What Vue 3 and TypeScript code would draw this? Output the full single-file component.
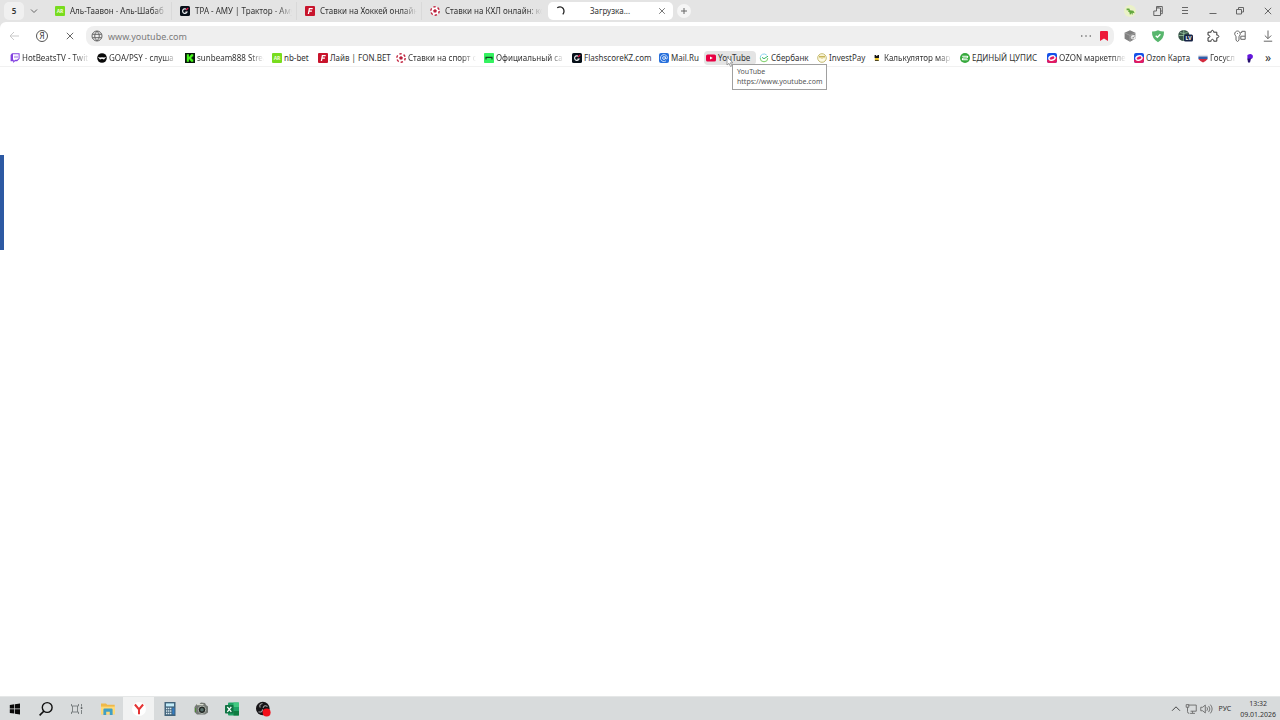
<script setup lang="ts">
import { ref } from 'vue'

interface Tab { icon: string; title: string }
interface Bookmark { icon: string; title: string; width: number; fade?: boolean; hovered?: boolean }
interface Tool { icon: string; label: string }

const address = ref('www.youtube.com')

const tabs: Tab[] = [
  { icon: 'nb', title: 'Аль-Таавон - Аль-Шабаб' },
  { icon: 'flash', title: 'ТРА - АМУ | Трактор - Аму' },
  { icon: 'fon', title: 'Ставки на Хоккей онлайн' },
  { icon: 'ball', title: 'Ставки на КХЛ онлайн: ко' },
]

const bookmarks: Bookmark[] = [
  { icon: 'twitch', title: 'HotBeatsTV - Twit', width: 87, fade: true },
  { icon: 'goa', title: 'GOA/PSY - слуша', width: 88, fade: true },
  { icon: 'kick', title: 'sunbeam888 Strea', width: 87, fade: true },
  { icon: 'nb', title: 'nb-bet', width: 46 },
  { icon: 'fon', title: 'Лайв | FON.BET', width: 78 },
  { icon: 'ball', title: 'Ставки на спорт о', width: 88, fade: true },
  { icon: 'official', title: 'Официальный са', width: 88, fade: true },
  { icon: 'flash', title: 'FlashscoreKZ.com', width: 87 },
  { icon: 'mail', title: 'Mail.Ru', width: 47 },
  { icon: 'youtube', title: 'YouTube', width: 53, hovered: true },
  { icon: 'sber', title: 'Сбербанк', width: 58 },
  { icon: 'invest', title: 'InvestPay', width: 55 },
  { icon: 'calc', title: 'Калькулятор мар', width: 88, fade: true },
  { icon: 'cupis', title: 'ЕДИНЫЙ ЦУПИС', width: 87 },
  { icon: 'ozon', title: 'OZON маркетпле', width: 87, fade: true },
  { icon: 'ozon', title: 'Ozon Карта', width: 64 },
  { icon: 'gos', title: 'Госусл', width: 47, fade: true },
  { icon: 'pwave', title: '', width: 12 },
]

const windowTools: Tool[] = [
  { icon: 'dino', label: 'Профиль' },
  { icon: 'panels', label: 'Коллекции' },
  { icon: 'menu', label: 'Меню' },
  { icon: 'min', label: 'Свернуть' },
  { icon: 'restore', label: 'Восстановить' },
  { icon: 'close', label: 'Закрыть' },
]

const extensions: Tool[] = [
  { icon: 'cube', label: 'Расширение' },
  { icon: 'shield', label: 'Защита' },
  { icon: 'lv', label: 'Перевод' },
  { icon: 'puzzle', label: 'Расширения' },
  { icon: 'keys', label: 'Пароли' },
  { icon: 'download', label: 'Загрузки' },
]

const apps: Tool[] = [
  { icon: 'folder', label: 'Проводник' },
  { icon: 'yandex', label: 'Яндекс Браузер' },
  { icon: 'calculator', label: 'Калькулятор' },
  { icon: 'camera', label: 'Камера' },
  { icon: 'excel', label: 'Excel' },
  { icon: 'obs', label: 'OBS' },
]
</script>

<template>
  <div class="screen">
    <svg class="defs" aria-hidden="true">
      <symbol id="nb" viewBox="0 0 10 10"><rect width="10" height="10" rx="1" fill="#78dc1e" /><text x="5" y="7" text-anchor="middle" font-size="5" font-weight="700" fill="#effbd9">AR</text></symbol>
      <symbol id="flash" viewBox="0 0 10 10"><rect width="10" height="10" rx="1.6" fill="#071019" /><path d="M6 3.1A2.3 2.3 0 1 0 7 6.1H5.4" fill="none" stroke="#e8ecee" stroke-width="1.2" /><path d="M6 4.2 8.2 2" stroke="#ee1848" stroke-width="1.2" /></symbol>
      <symbol id="fon" viewBox="0 0 10 10"><rect width="10" height="10" rx="1" fill="#c8142c" /><path d="M3.4 8 4.4 2.6H7.7M4 5.2H6.9" fill="none" stroke="#fff" stroke-width="1.3" /></symbol>
      <symbol id="ball" viewBox="0 0 10 10"><circle cx="5" cy="5" r="4.2" fill="#fff" stroke="#c22742" stroke-width="1.4" stroke-dasharray="2.4 2" /><path d="m5 3 1.9 1.4-.7 2.2H3.8l-.7-2.2Z" fill="#b9203c" /></symbol>
      <symbol id="twitch" viewBox="0 0 10 10"><path d="M2 .2h7.6v5.6L7.2 8.2H5L3.2 10V8.2H.6V2Z" fill="#8240e0" /><path d="M3 1.2h5.6v4.2L7 6.8H5L3.8 8V6.8H3Z" fill="#fff" /><path d="M5 2.8v2.3M7 2.8v2.3" stroke="#8240e0" stroke-width=".8" /></symbol>
      <symbol id="goa" viewBox="0 0 10 10"><circle cx="5" cy="5" r="4.8" fill="#090909" /><path d="M.8 4 3 4.6 5 4.2l2 .4 2.2-.6L7 6.4 5 5.8 3 6.4Z" fill="#fff" /></symbol>
      <symbol id="kick" viewBox="0 0 10 10"><rect width="10" height="10" fill="#07180a" /><path d="M1.8 1.2h2.1v2.2h1V2.3h1V1.2h2.4v2.3H7.2v1h-1v1h1v1h1.1v2.3H5.9V7.7h-1V6.6h-1v2.2H1.8Z" fill="#46f51c" /></symbol>
      <symbol id="official" viewBox="0 0 10 10"><rect width="10" height="10" rx=".7" fill="#34f260" /><path d="M2 6.5V4.3h6v2.2" fill="none" stroke="#104621" stroke-width="1.2" /></symbol>
      <symbol id="mail" viewBox="0 0 10 10"><rect width="10" height="10" rx="2" fill="#2770dc" /><circle cx="5" cy="5" r="1.4" fill="none" stroke="#fff" stroke-width=".8" /><path d="M6.5 3.5v2q1.6 1.4 1.9-.8A3.5 3.5 0 1 0 7 7.9" fill="none" stroke="#e9f3ff" stroke-width=".8" /></symbol>
      <symbol id="youtube" viewBox="0 0 10 10"><rect y="1.4" width="10" height="7.2" rx="1.6" fill="#e80043" /><path d="m4 3.4 2.8 1.6L4 6.6Z" fill="#fff" /></symbol>
      <symbol id="sber" viewBox="0 0 10 10"><path d="M7.8 2.2A3.8 3.8 0 0 0 1.2 5" fill="none" stroke="#8bd2ee" /><path d="M1.2 5A3.8 3.8 0 0 0 8.8 5" fill="none" stroke="#7bcf65" /><path d="m3 4.4 2 1.3 4-2.5" fill="none" stroke="#36b66b" /></symbol>
      <symbol id="invest" viewBox="0 0 10 10"><circle cx="5" cy="5" r="4.3" fill="#fdfbe6" stroke="#b7aa52" stroke-width=".8" /><path d="M2 3.4h6M3 5.2V3.5M5 5.8V3.5M7 5.2V3.5" fill="none" stroke="#c0a840" stroke-width=".9" /></symbol>
      <symbol id="calc" viewBox="0 0 10 10"><path d="M2.6 2h1.6v1h1.2V2H7v3H2.6Z" fill="#161616" /><path d="M2.8 5h4v3h-4Z" fill="#edc82e" /><path d="M3 7.5h3.7" stroke="#4e4828" /></symbol>
      <symbol id="cupis" viewBox="0 0 10 10"><circle cx="5" cy="5" r="5" fill="#36a93c" /><path d="M2.2 3.3h4.9q1 0 .4 1L6.8 5H3.2l-.7.9q-.4.9.5.9h4.8" fill="none" stroke="#fff" stroke-width="1.1" /></symbol>
      <symbol id="ozon" viewBox="0 0 10 10"><rect width="10" height="10" rx="2" fill="#1550e8" /><path d="M0 7 10 4v4a2 2 0 0 1-2 2H2a2 2 0 0 1-2-2Z" fill="#e21b62" /><ellipse cx="5" cy="5" rx="3.2" ry="2.1" fill="#e21b62" stroke="#fff" stroke-width="1.4" transform="rotate(-20 5 5)" /></symbol>
      <symbol id="gos" viewBox="0 0 10 10"><path d="M.4 1.8h9.2v2H.4Z" fill="#e4e4e8" /><path d="M.4 3.5h9.2v2.7H.4Z" fill="#315da9" /><path d="M.5 6h9Q8 8.2 5 9.5 2 8.2.5 6Z" fill="#d32a3d" /></symbol>
      <symbol id="pwave" viewBox="0 0 10 10"><path d="M2.4 2Q6.5-.3 7.8 2.5 8.4 6 4.8 6L2.4 6.4Z" fill="#6416dc" /><path d="M2.4 5.8 6 5.5 5 9.6H3Z" fill="#27116f" /></symbol>
      <symbol id="dino" viewBox="0 0 16 16"><circle cx="8" cy="8" r="6" fill="#eaf1c8" /><path d="M4.6 5.5h2.8l.6 1.8 3.4.5 1.3 2.5-2-.6v1.7h-.8L9.4 10 8.6 11.4H7.8L7.4 9.2 6 8.6l.7-1.4H4.6Z" fill="#63a83e" /></symbol>
      <symbol id="panels" viewBox="0 0 16 16"><path d="M6.5 5V3.5h5.8v7.2h-1.8M3.8 8H6.5V5h4v7.5H3.8ZM8 3.5V5M10.5 8h1.8" class="line" /></symbol>
      <symbol id="menu" viewBox="0 0 16 16"><path d="M5 4.5h6M5 7.5h6M5 10.5h6" class="line" /></symbol>
      <symbol id="min" viewBox="0 0 16 16"><path d="M4.5 10.5h7" class="line" /></symbol>
      <symbol id="restore" viewBox="0 0 16 16"><path d="M4.5 6.5h5V11h-5ZM6.5 6.5v-2h5V9h-2" class="line" /></symbol>
      <symbol id="close" viewBox="0 0 16 16"><path d="m4.8 4.8 6.4 6.4m0-6.4-6.4 6.4" class="line" /></symbol>
      <symbol id="cube" viewBox="0 0 16 16"><path d="m8 2.2 5.4 2.6v6L8 13.8l-5.4-3v-6Z" fill="#808080" /><path d="m2.8 5 5.2 2.4L13.2 5M8 7.4v6" fill="none" stroke="#aaa" stroke-width=".7" /><circle cx="11.2" cy="9.3" r="2.3" fill="#eee" /><path d="m10 9.3 1 1 1.5-2" fill="none" stroke="#777" stroke-width=".8" /></symbol>
      <symbol id="shield" viewBox="0 0 16 16"><path d="M8 2.2q3 1.3 6 1.2.4 7-6 10.8Q1.6 10.4 2 3.4 5 3.5 8 2.2Z" fill="#58b66d" /><path d="m5.7 7.7 1.7 1.6 3-3" fill="none" stroke="#fff" stroke-width="1.3" /></symbol>
      <symbol id="lv" viewBox="0 0 16 16"><circle cx="6.8" cy="7.5" r="5.6" fill="#385348" /><path d="M1.4 7.5h11M6.8 2v11M3 4.5Q6.8 6.5 10.6 4.5" fill="none" stroke="#9ac9a4" stroke-width=".8" /><rect x="7" y="6.5" width="9" height="7" rx="1.5" fill="#162346" /><text x="11.5" y="12" text-anchor="middle" font-size="5" font-weight="700" fill="#fff">LV</text></symbol>
      <symbol id="puzzle" viewBox="0 0 16 16"><path d="M3 4.2h3.2c-.7-2.5 3-2.5 2.4 0h3.2v3c2.7-.6 2.7 3 0 2.5v3.5H8.7c.4-2.5-3-2.5-2.5 0H3V9.7c2.5.4 2.5-3 0-2.5Z" class="dark" /></symbol>
      <symbol id="keys" viewBox="0 0 16 16"><path d="M4 8.2a2.8 2.8 0 1 1 3 0v4l-1.5 1.3L4 12.2ZM5.5 5v.8M8.6 4.5H9.8V3.3h3.4v8H8.8V8.2h4.4" class="line" /></symbol>
      <symbol id="download" viewBox="0 0 16 16"><path d="M8 2.5v8M4.8 7.5 8 10.7l3.2-3.2M3.8 13.2h8.4" class="line" /></symbol>
      <symbol id="windows" viewBox="0 0 16 16"><path d="m2.8 4 4.5-.7v4.2H2.8Zm5.2-.8 5-.8v5.1H8ZM2.8 8.3h4.5v4.3L2.8 12Zm5.2 0h5v5.2l-5-.8Z" fill="#080808" /></symbol>
      <symbol id="search" viewBox="0 0 16 16"><circle cx="9.2" cy="6.5" r="4.9" fill="none" stroke="#111" stroke-width="1.4" /><path d="m6 10-4.4 4.4" stroke="#111" stroke-width="1.6" /></symbol>
      <symbol id="taskview" viewBox="0 0 16 16"><path d="M2.5 3v2h7V3M2.5 13v-2h7v2M3.5 5v6M8.5 5v6M12.5 3v2.5M12.5 9V13" fill="none" stroke="#74797b" stroke-width=".9" /><path d="M11.8 6.3h1.5v1.5h-1.5Z" fill="#3c4143" /></symbol>
      <symbol id="folder" viewBox="0 0 16 16"><path d="M1 2.4h5l1.2 1.4h7.5v9.4H1Z" fill="#efb949" /><path d="M1 5.6h14v7.6H1Z" fill="#ffda78" /><path d="M3.4 14V8.6q0-1 1-1h7.2q1 0 1 1V14H9.8v-3.2H6.2V14Z" fill="#419fc5" /></symbol>
      <symbol id="yandex" viewBox="0 0 16 16"><circle cx="8" cy="8" r="7" fill="#fff" /><path d="m3.9 3.5 4.1 5 4.1-5M8 8v5.2" fill="none" stroke="#e43434" stroke-width="2" /></symbol>
      <symbol id="calculator" viewBox="0 0 16 16"><rect x="2.5" y="1" width="11" height="14" fill="#42647c" /><path d="M4 2.4h8v3H4Z" fill="#c4edfa" /><path d="M4 7.5h5.5M4 10h5.5M4 12.5h5.5" stroke="#d9e7ed" stroke-width="1.4" stroke-dasharray="1.4 .6" /><path d="M10.4 6.8h2v6.5h-2Z" fill="#327cc5" /></symbol>
      <symbol id="camera" viewBox="0 0 16 16"><path d="m1.5 6 2-2.7 3-.2L8 1.5l4 .6 1 2 2 1.3v6.2l-3 2H4L1.5 11Z" fill="#747974" /><path d="M4 3.6h6.5" stroke="#d6dacf" stroke-width="1.2" /><circle cx="9" cy="8.8" r="3.8" fill="#222724" stroke="#adb4ad" /><circle cx="9" cy="8.8" r="1.8" fill="#58706c" /><path d="M2.5 7v4" stroke="#4c8d35" /></symbol>
      <symbol id="excel" viewBox="0 0 16 16"><rect x="4" y="1.5" width="11" height="13" rx="1" fill="#20a366" /><path d="M9.5 1.5H15V6H9.5Z" fill="#42c881" /><path d="M9.5 10H15v4.5H9.5Z" fill="#107c41" /><rect x="1" y="4" width="8.5" height="8.5" rx=".8" fill="#117344" /><path d="m3.3 5.8 4 5m0-5-4 5" stroke="#fff" stroke-width="1.3" /></symbol>
      <symbol id="obs" viewBox="0 0 16 16"><circle cx="7.8" cy="7.5" r="6.8" fill="#161417" /><path d="M7.5 2.5q-4 .8-2.2 4M12.5 5.5q-3-2-4.4 1.2M3.5 10.8q3.8 1 4.1-2.4" fill="none" stroke="#a5a5a5" stroke-width="1.1" /><circle cx="11.6" cy="11.5" r="4" fill="#f20e18" /></symbol>
      <symbol id="monitor" viewBox="0 0 16 16"><path d="M5 3.5h9v7H7.5M9.8 10.5v2M7 13h5.5M2.5 3v3h3V3ZM4 6v5q0 2 2 2" class="line" /></symbol>
      <symbol id="speaker" viewBox="0 0 16 16"><path d="M2 6h2.2l3-2.5v9l-3-2.5H2ZM9 6q1.5 2 0 4M11 4.5q3 3.5 0 7M13 3q4 5 0 10" class="line" /></symbol>
    </svg>

    <header class="tabstrip">
      <button class="count">5</button>
      <button class="more" aria-label="Список вкладок"><svg viewBox="0 0 16 16" class="i16"><path d="m5 6.5 3 3 3-3" class="line" /></svg></button>
      <nav class="tabs">
        <button v-for="tab in tabs" :key="tab.title" class="tab">
          <svg class="i10"><use :href="'#' + tab.icon" /></svg>
          <span class="tab-title fade">{{ tab.title }}</span>
        </button>
        <div class="tab active">
          <svg class="i10" viewBox="0 0 10 10"><path d="M2.2 1.8Q5.8-.3 8.2 2.5 10 5.4 7.8 8.4" fill="none" stroke="#222" stroke-width="1.3" /></svg>
          <span class="loading">Загрузка...</span>
          <button class="tab-close" aria-label="Закрыть вкладку"><svg class="i14"><use href="#close" /></svg></button>
        </div>
      </nav>
      <button class="new-tab" aria-label="Новая вкладка"><svg viewBox="0 0 14 14" class="i14"><path d="M7 4v6M4 7h6" class="line" /></svg></button>
      <div class="tools">
        <button v-for="tool in windowTools" :key="tool.icon" :aria-label="tool.label"><svg class="i16"><use :href="'#' + tool.icon" /></svg></button>
      </div>
    </header>

    <section class="chrome">
      <div class="toolbar">
        <div class="navigation">
          <button aria-label="Назад"><svg viewBox="0 0 16 16" class="i16"><path d="M13 8H4m4-4L4 8l4 4" fill="none" stroke="#c9c9c9" /></svg></button>
          <button class="ya" aria-label="Яндекс">Я</button>
          <button aria-label="Остановить"><svg class="i16"><use href="#close" /></svg></button>
        </div>
        <div class="omnibox">
          <svg viewBox="0 0 12 12" class="globe"><path d="M6 1a5 5 0 1 0 0 10A5 5 0 0 0 6 1Q1.4 6 6 11 10.6 6 6 1M1.4 4.3h9.2M1.4 7.7h9.2" class="line" /></svg>
          <input v-model="address" aria-label="Адрес" />
          <button class="dots" aria-label="Ещё"><svg viewBox="0 0 12 4" class="dots-icon"><path d="M1 2h1.4M5.3 2h1.4M9.6 2H11" stroke="#777" stroke-width="1.3" /></svg></button>
          <button aria-label="Закладка"><svg viewBox="0 0 10 12" class="flag"><path d="M1 2q0-1 1-1h6q1 0 1 1v9L5 8.5 1 11Z" fill="#ed1838" /></svg></button>
        </div>
        <div class="tools">
          <button v-for="tool in extensions" :key="tool.icon" :aria-label="tool.label"><svg class="i16"><use :href="'#' + tool.icon" /></svg></button>
        </div>
      </div>

      <nav class="bookmarks">
        <a v-for="(mark, index) in bookmarks" :key="index" href="#" class="bookmark" :class="{ hovered: mark.hovered }" :style="{ width: mark.width + 'px' }">
          <svg class="i10"><use :href="'#' + mark.icon" /></svg>
          <span class="mark-title" :class="{ fade: mark.fade }">{{ mark.title }}</span>
          <span v-if="mark.hovered" class="tooltip" role="tooltip">YouTube<br />https://www.youtube.com</span>
          <svg v-if="mark.hovered" class="cursor" viewBox="0 0 8 12"><path d="M1 1v8l2-1.7 1.5 3.2 1.4-.7-1.5-3H7Z" fill="#fff" stroke="#8b8b8b" stroke-width=".8" /></svg>
        </a>
        <button class="overflow" aria-label="Другие закладки">»</button>
      </nav>
    </section>

    <main class="page"><div class="edge"></div></main>

    <footer class="taskbar">
      <div class="system">
        <button aria-label="Пуск"><svg class="i16"><use href="#windows" /></svg></button>
        <button aria-label="Поиск"><svg class="i16"><use href="#search" /></svg></button>
        <button aria-label="Представление задач"><svg class="i16"><use href="#taskview" /></svg></button>
      </div>
      <div class="apps">
        <button v-for="app in apps" :key="app.icon" :aria-label="app.label" :class="{ current: app.icon === 'yandex' }"><svg class="i16"><use :href="'#' + app.icon" /></svg></button>
      </div>
      <div class="tray">
        <svg viewBox="0 0 16 16" class="i14"><path d="m3.5 10 4.5-4.5 4.5 4.5" class="dark" /></svg>
        <svg class="i14"><use href="#monitor" /></svg>
        <svg class="i14"><use href="#speaker" /></svg>
        <span class="lang">РУС</span>
        <time class="clock">13:32<br />09.01.2026</time>
      </div>
    </footer>
  </div>
</template>

<style>
html, body { margin: 0; background: #fff; }
</style>

<style scoped>
.screen { display: flex; flex-direction: column; min-height: 100vh; font-family: "Noto Sans", "Open Sans", sans-serif; font-size: 8px; line-height: 12px; color: #333; background: #e4e4e4; }
.defs { position: absolute; width: 0; height: 0; }
button { display: flex; align-items: center; justify-content: center; border: 0; padding: 0; background: none; font: inherit; color: inherit; }
svg { display: block; flex: none; }
.line { fill: none; stroke: #666; stroke-width: 1; }
.dark { fill: none; stroke: #333; stroke-width: 1; }
.i10 { width: 10px; height: 10px; }
.i14 { width: 14px; height: 14px; }
.i16 { width: 16px; height: 16px; }
.fade { -webkit-mask-image: linear-gradient(to right, #000 calc(100% - 14px), transparent); mask-image: linear-gradient(to right, #000 calc(100% - 14px), transparent); }

.tabstrip { display: flex; align-items: center; height: 22px; padding-left: 4px; background: #e4e4e4; }
.count { width: 20px; height: 18px; border-radius: 5px; background: #f0f0f0; font-weight: 600; }
.more { width: 20px; height: 18px; }
.tabs { display: flex; margin-left: 2px; }
.tab { display: flex; align-items: center; justify-content: flex-start; gap: 5px; width: 125px; height: 18px; box-sizing: border-box; padding: 0 4px 0 8px; border-left: 1px solid #d9d9d9; }
.tab:first-child { border-color: transparent; }
.tab-title { flex: 1; min-width: 0; white-space: nowrap; text-align: left; }
.tab.active { margin-left: 2px; border: 0; border-radius: 5px; background: #fff; padding: 0 4px 0 7px; }
.loading { flex: 1; text-align: center; }
.new-tab { width: 14px; height: 14px; margin-left: 4px; border-radius: 50%; background: #f5f5f5; }
.tools { display: flex; justify-content: space-between; width: 154px; margin-left: auto; padding-right: 4px; }

.chrome { background: #fff; border-radius: 6px 0 0 0; border-bottom: 1px solid #f1f1f1; }
.toolbar { display: flex; align-items: center; height: 28px; }
.navigation { display: flex; align-items: center; justify-content: space-between; width: 72px; padding-left: 6px; }
.ya { width: 12px; height: 12px; box-sizing: border-box; border: 1px solid #555; border-radius: 50%; line-height: 10px; }
.omnibox { display: flex; align-items: center; flex: 1; height: 20px; margin: 0 8px; box-sizing: border-box; padding: 0 5px; border-radius: 8px; background: #efefef; }
.globe { width: 12px; height: 12px; }
.omnibox input { flex: 1; min-width: 0; height: 16px; border: 0; padding: 0 5px; outline: 0; background: none; font: inherit; font-size: 9px; color: #7b7b7b; }
.dots { margin-right: 7px; }
.dots-icon { width: 12px; height: 4px; }
.flag { width: 10px; height: 12px; }
.bookmarks { display: flex; align-items: center; height: 16px; padding: 0 6px 0 10px; }
.bookmark { position: relative; display: flex; flex: none; align-items: center; gap: 2px; height: 14px; box-sizing: border-box; padding-right: 8px; color: #333; text-decoration: none; }
.mark-title { position: relative; flex: 1; min-width: 0; white-space: nowrap; }
.hovered::before { content: ""; position: absolute; inset: 0 3px 0 -2px; border-radius: 4px; background: #e4e4e4; }
.hovered svg { position: relative; }
.tooltip { position: absolute; z-index: 2; top: 13px; left: 26px; box-sizing: border-box; padding: 2px 4px; border: 1px solid #a0a0a0; background: #fff; font-size: 7px; line-height: 10px; white-space: nowrap; color: #555; }
.bookmark .cursor { position: absolute; z-index: 3; top: 5px; left: 20px; width: 8px; height: 12px; }
.overflow { width: 12px; margin-left: auto; font-size: 12px; }

.page { display: flex; flex: 1; flex-direction: column; background: #fff; }
.edge { width: 4px; height: 95px; margin-top: 88px; background: #2d59a3; }

.taskbar { display: flex; height: 24px; background: #d8dbdc; border-top: 1px solid #e5e7e7; box-sizing: border-box; }
.system { display: flex; width: 92px; }
.system button { flex: 1; }
.apps { display: flex; }
.apps button { width: 31px; box-sizing: border-box; }
.apps .current { background: #f1f2f2; }
.tray { display: flex; align-items: center; margin-left: auto; padding-right: 4px; gap: 1px; }
.lang { margin: 0 8px 0 5px; font-size: 7px; }
.clock { font-size: 7px; line-height: 11px; text-align: center; }
</style>
